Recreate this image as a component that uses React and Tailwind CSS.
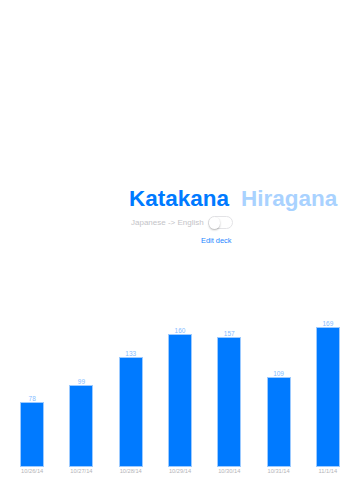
import React from 'react'

const stats = [
  { date: '10/26/14', count: 78 },
  { date: '10/27/14', count: 99 },
  { date: '10/28/14', count: 133 },
  { date: '10/29/14', count: 160 },
  { date: '10/30/14', count: 157 },
  { date: '10/31/14', count: 109 },
  { date: '11/1/14', count: 169 },
]

export default function App() {
  return (
    <div
      className="h-[480px] w-[360px] bg-white flex flex-col overflow-hidden"
      style={{ fontFamily: '"Liberation Sans", Arial, sans-serif' }}
    >
      {/* Deck picker */}
      <div className="pt-[187.5px] pl-[129px] flex items-start gap-[12px]">
        <button className="block text-[22.5px] leading-none font-bold text-[#007aff]">Katakana</button>
        <button className="block text-[22.5px] leading-none font-bold text-[#a9d2ff]">Hiragana</button>
      </div>

      <div className="mt-[6px] pl-[131px] flex items-center gap-[4px] h-[13px]">
        <span className="text-[8px] leading-none text-[#c4c4c8]">Japanese -&gt; English</span>
        <div className="relative w-[25px] h-[13px] rounded-full border border-[#e3e3e6] bg-white">
          <div className="absolute left-0 top-0 w-[11.5px] h-[11.5px] rounded-full bg-white shadow-[0_1px_2px_rgba(0,0,0,0.3)]" />
        </div>
      </div>

      <div className="mt-[6.5px] pl-[201px] flex">
        <button className="block text-[7.4px] leading-[9px] text-[#1a85ff]">Edit deck</button>
      </div>

      {/* Chart */}
      <div className="mt-auto px-[7.5px] pb-[5px] grid grid-cols-7 items-end">
        {stats.map((s) => (
          <div key={s.date} className="flex flex-col items-center">
            <span className="text-[6.5px] leading-[7px] text-[#86bdff]">{s.count}</span>
            <div
              className="w-[24px] bg-[#007aff] border border-[#9ccaff]"
              style={{ height: `${s.count * 0.83}px` }}
            />
            <span className="text-[5.7px] leading-[8px] text-[#b4b4b8] whitespace-nowrap">{s.date}</span>
          </div>
        ))}
      </div>
    </div>
  )
}
